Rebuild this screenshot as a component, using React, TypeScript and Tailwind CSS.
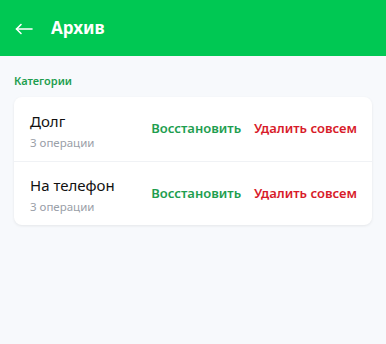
import React from "react";

const rows = [
  { title: "Долг", sub: "3 операции" },
  { title: "На телефон", sub: "3 операции" },
];

export default function App() {
  return (
    <div className="w-[386px] h-[344px] bg-[#f7f9fc]" style={{ fontFamily: '"Noto Sans", "Open Sans", sans-serif' }}>
      <div className="h-[56px] bg-[#00c853] flex items-center pl-[15px]">
        <svg width="18" height="12" viewBox="0 0 18 12" className="mr-[18px] mt-[2px]" fill="none" stroke="white" strokeWidth="1.6" strokeLinecap="round" strokeLinejoin="round">
          <path d="M17 6H1.5" />
          <path d="M6 1.5L1.5 6L6 10.5" />
        </svg>
        <span className="text-white font-bold text-[17px]">Архив</span>
      </div>
      <div className="px-[14px] pt-[17px]">
        <div className="text-[11px] font-semibold text-[#1e9e4f] leading-[16px]">Категории</div>
        <div className="mt-[8px] bg-white rounded-[8px] shadow-[0_1px_3px_rgba(0,0,0,0.08)]">
          {rows.map((r, i) => (
            <div key={i} className={`flex items-center h-[64px] pl-[16px] pr-[15px] ${i > 0 ? "border-t border-[#f0f2f5]" : ""}`}>
              <div className="flex-1 mt-[3px]">
                <div className="text-[15px] text-[#111] leading-[20px]">{r.title}</div>
                <div className="text-[11.5px] text-[#9aa0a8] leading-[16px] mt-[4px]">{r.sub}</div>
              </div>
              <button className="text-[13px] font-semibold text-[#1e9e4f] mr-[13px]">Восстановить</button>
              <button className="text-[13px] font-semibold text-[#d81b2a]">Удалить совсем</button>
            </div>
          ))}
        </div>
      </div>
    </div>
  );
}
